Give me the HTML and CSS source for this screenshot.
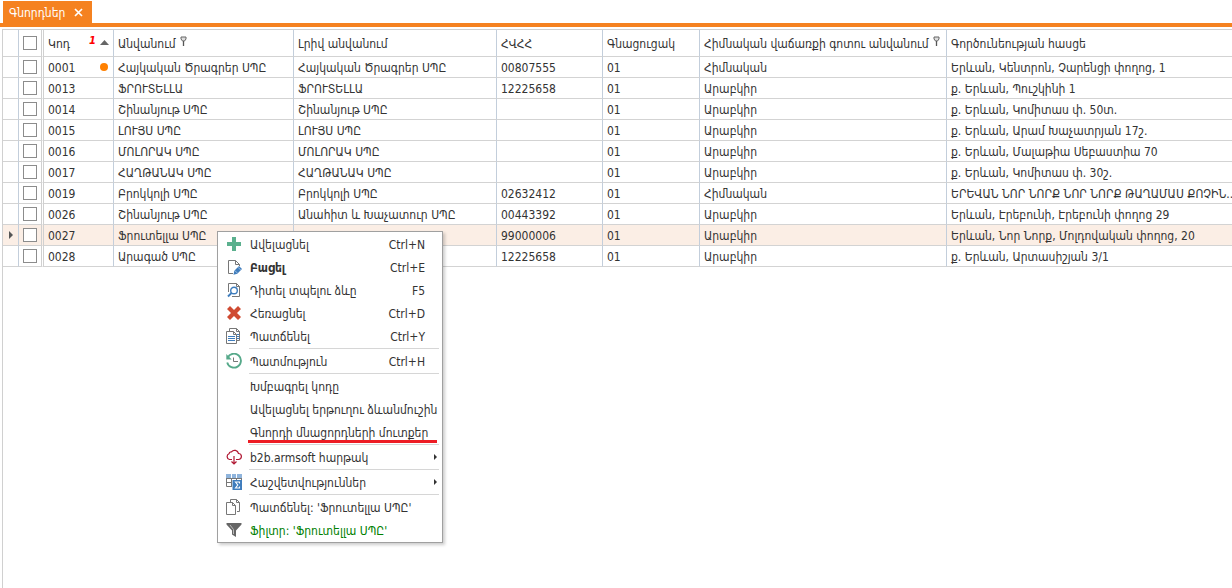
FILE: index.html
```html
<!DOCTYPE html>
<html lang="hy">
<head>
<meta charset="utf-8">
<title>Գնորդներ</title>
<link rel="stylesheet" href="styles.css">
</head>
<body>
<nav class="tabs">
  <div class="tab">
    <span>Գնորդներ</span>
    <button class="tab-close" type="button" aria-label="Փակել"><svg width="9" height="9" viewBox="0 0 9 9"><path d="M1 1l7 7M8 1L1 8" stroke="#fff" stroke-width="1.7"/></svg></button>
  </div>
</nav>
<main class="grid">
<table class="table">
  <colgroup><col class="c-mark"><col class="c-check"><col class="c-code"><col class="c-name"><col class="c-full"><col class="c-tax"><col class="c-price"><col class="c-zone"><col></colgroup>
  <thead>
    <tr>
      <th></th>
      <th class="check"><input type="checkbox" aria-label="Ընտրել բոլորը"></th>
      <th><div class="head"><span>Կոդ</span><span class="sort"><b class="order">1</b><svg class="arrow" width="9" height="5" viewBox="0 0 9 5"><path d="M0 5L4.500 0 9 5z" fill="#666"/></svg></span></div></th>
      <th>Անվանում<svg class="pin" width="7" height="10" viewBox="0 0 7 10"><path d="M1 1h5v2L4.500 5h-2L1 3z" fill="#ddd" stroke="#666"/><path d="M3.500 5v5" stroke="#555" stroke-width="1.300"/></svg></th>
      <th>Լրիվ անվանում</th>
      <th>ՀՎՀՀ</th>
      <th>Գնացուցակ</th>
      <th>Հիմնական վաճառքի գոտու անվանում<svg class="pin" width="7" height="10" viewBox="0 0 7 10"><path d="M1 1h5v2L4.500 5h-2L1 3z" fill="#ddd" stroke="#666"/><path d="M3.500 5v5" stroke="#555" stroke-width="1.300"/></svg></th>
      <th>Գործունեության հասցե</th>
    </tr>
  </thead>
  <tbody>
    <tr><td></td><td class="check"><input type="checkbox" aria-label="0001"></td><td><div class="head"><span>0001</span><i class="dot"></i></div></td><td>Հայկական Ծրագրեր ՍՊԸ</td><td>Հայկական Ծրագրեր ՍՊԸ</td><td>00807555</td><td>01</td><td>Հիմնական</td><td>Երևան, Կենտրոն, Չարենցի փողոց, 1</td></tr>
    <tr><td></td><td class="check"><input type="checkbox" aria-label="0013"></td><td>0013</td><td>ՖՐՈՒՏԵԼԼԱ</td><td>ՖՐՈՒՏԵԼԼԱ</td><td>12225658</td><td>01</td><td>Արաբկիր</td><td>ք. Երևան, Պուշկինի 1</td></tr>
    <tr><td></td><td class="check"><input type="checkbox" aria-label="0014"></td><td>0014</td><td>Շինանյութ ՍՊԸ</td><td>Շինանյութ ՍՊԸ</td><td></td><td>01</td><td>Արաբկիր</td><td>ք. Երևան, Կոմիտաս փ. 50տ.</td></tr>
    <tr><td></td><td class="check"><input type="checkbox" aria-label="0015"></td><td>0015</td><td>ԼՈՒՅՍ ՍՊԸ</td><td>ԼՈՒՅՍ ՍՊԸ</td><td></td><td>01</td><td>Արաբկիր</td><td>ք. Երևան, Արամ Խաչատրյան 17շ.</td></tr>
    <tr><td></td><td class="check"><input type="checkbox" aria-label="0016"></td><td>0016</td><td>ՄՈԼՈՐԱԿ ՍՊԸ</td><td>ՄՈԼՈՐԱԿ ՍՊԸ</td><td></td><td>01</td><td>Արաբկիր</td><td>ք. Երևան, Մալաթիա Սեբաստիա 70</td></tr>
    <tr><td></td><td class="check"><input type="checkbox" aria-label="0017"></td><td>0017</td><td>ՀԱՂԹԱՆԱԿ ՍՊԸ</td><td>ՀԱՂԹԱՆԱԿ ՍՊԸ</td><td></td><td>01</td><td>Արաբկիր</td><td>ք. Երևան, Կոմիտաս փ. 30շ.</td></tr>
    <tr><td></td><td class="check"><input type="checkbox" aria-label="0019"></td><td>0019</td><td>Բրոկկոլի ՍՊԸ</td><td>Բրոկկոլի ՍՊԸ</td><td>02632412</td><td>01</td><td>Հիմնական</td><td>ԵՐԵՎԱՆ ՆՈՐ ՆՈՐՔ ՆՈՐ ՆՈՐՔ ԹԱՂԱՄԱՍ ՔՈՉԻՆ..</td></tr>
    <tr><td></td><td class="check"><input type="checkbox" aria-label="0026"></td><td>0026</td><td>Շինանյութ ՍՊԸ</td><td>Անահիտ և Խաչատուր ՍՊԸ</td><td>00443392</td><td>01</td><td>Արաբկիր</td><td>Երևան, Էրեբունի, Էրեբունի փողոց 29</td></tr>
    <tr class="current"><td class="mark"><svg width="4" height="8" viewBox="0 0 4 8"><path d="M0 0l4 4-4 4z" fill="#555"/></svg></td><td class="check"><input type="checkbox" aria-label="0027"></td><td>0027</td><td>Ֆրուտելլա ՍՊԸ</td><td></td><td>99000006</td><td>01</td><td>Արաբկիր</td><td>Երևան, Նոր Նորք, Մոլդովական փողոց, 20</td></tr>
    <tr><td></td><td class="check"><input type="checkbox" aria-label="0028"></td><td>0028</td><td>Արագած ՍՊԸ</td><td></td><td>12225658</td><td>01</td><td>Արաբկիր</td><td>ք. Երևան, Արտասիշյան 3/1</td></tr>
  </tbody>
</table>
</main>
<div class="menu" role="menu">
  <button class="item" role="menuitem"><svg class="icon" viewBox="0 0 16 16"><path d="M6 1h4v5h5v4h-5v5H6v-5H1V6h5z" fill="#5bb08e"/></svg><span>Ավելացնել</span><kbd>Ctrl+N</kbd></button>
  <button class="item strong" role="menuitem"><svg class="icon" viewBox="0 0 16 16"><path d="M7 14.500H2.500v-13h7l4 4V7M9.500 1.500v4h4" fill="none" stroke="#777"/><path d="M7.500 15.800l.8-4L13 7l3 3-4.700 4.800z" fill="#3f7dbd"/><path d="M8.800 11.500l2.800 2.800M12 8.300l2.800 2.800" stroke="#fff" stroke-width=".5"/></svg><span>Բացել</span><kbd>Ctrl+E</kbd></button>
  <button class="item" role="menuitem"><svg class="icon" viewBox="0 0 16 16"><path d="M2.500 10V1.500h8l3 3v10H6M10.500 1.500v3h3" fill="none" stroke="#777"/><circle cx="8" cy="8.500" r="3.300" fill="#fff" stroke="#3f7dbd" stroke-width="1.400"/><path d="M5.600 10.900L2 14.500" stroke="#3f7dbd" stroke-width="2"/></svg><span>Դիտել տպելու ձևը</span><kbd>F5</kbd></button>
  <button class="item" role="menuitem"><svg class="icon" viewBox="0 0 16 16"><path d="M4 1l4 4 4-4 3 3-4 4 4 4-3 3-4-4-4 4-3-3 4-4-4-4z" fill="#cf4a31"/></svg><span>Հեռացնել</span><kbd>Ctrl+D</kbd></button>
  <button class="item" role="menuitem"><svg class="icon" viewBox="0 0 16 16"><path d="M3.500 3V.5h7l3 3v9H11M10.500.5v3h3" fill="none" stroke="#777"/><path d="M.5 3.500h7l3 3v9H.5zM7.500 3.500v3h3" fill="#fff" stroke="#777"/><path d="M2 8.500h7M2 10.500h7M2 12.500h7M11 6.500h2M11 8.500h2M11 10.500h2" stroke="#3f7dbd"/></svg><span>Պատճենել</span><kbd>Ctrl+Y</kbd></button>
  <hr>
  <button class="item" role="menuitem"><svg class="icon" viewBox="0 0 16 16"><path d="M1.700 4.500A7 7 0 1 1 1.200 9.500" fill="none" stroke="#56a98a" stroke-width="1.800"/><path d="M.3 1v5.500h5.400z" fill="#56a98a"/><path d="M7.500 4.500v4H12" fill="none" stroke="#777"/></svg><span>Պատմություն</span><kbd>Ctrl+H</kbd></button>
  <hr>
  <button class="item" role="menuitem"><i class="icon"></i><span>Խմբագրել կոդը</span></button>
  <button class="item" role="menuitem"><i class="icon"></i><span>Ավելացնել երթուղու ձևանմուշին</span></button>
  <button class="item noted" role="menuitem"><i class="icon"></i><span>Գնորդի մնացորդների մուտքեր</span></button>
  <hr>
  <button class="item" role="menuitem"><svg class="icon" viewBox="0 0 16 16"><path d="M6 10.500H3.500a3 3 0 0 1-.5-5.700 2.300 2.300 0 0 1 2.500-2 4 4 0 0 1 7 1.700 3 3 0 0 1-.2 6H10M8 7v8M5.500 12.500L8 15l2.500-2.500" fill="none" stroke="#b01732" stroke-width="1.200"/></svg><span>b2b.armsoft հարթակ</span><svg class="sub" width="3" height="6" viewBox="0 0 3 6"><path d="M0 0l3 3-3 3z" fill="#333"/></svg></button>
  <hr>
  <button class="item" role="menuitem"><svg class="icon" viewBox="0 0 16 16"><path d="M0 0h16v4H0z" fill="#8fb4dc"/><path d="M.5 4v8.500H6M0 4.500h16M0 8.500h6M5.500 4v9M10.500 4v2M15.500 4v2" fill="none" stroke="#777"/><path d="M5.500 0v4M10.500 0v4" stroke="#fff"/><path d="M6.500 6H16v10H6.500z" fill="#3f7dbd"/><path d="M13.500 9.500V8h-4l2.300 3-2.300 3h4v-1.500" fill="none" stroke="#fff" stroke-width="1.100"/></svg><span>Հաշվետվություններ</span><svg class="sub" width="3" height="6" viewBox="0 0 3 6"><path d="M0 0l3 3-3 3z" fill="#333"/></svg></button>
  <hr>
  <button class="item" role="menuitem"><svg class="icon" viewBox="0 0 16 16"><path d="M4.500 3V.5h6l3 3v9H11M10.500.5v3h3M.5 3.500h6l3 3v9H.5zM6.500 3.500v3h3" fill="none" stroke="#777"/></svg><span>Պատճենել: 'Ֆրուտելլա ՍՊԸ'</span></button>
  <button class="item filter" role="menuitem"><svg class="icon" viewBox="0 0 16 16"><path d="M.5 1h15v1.500L10 8.500V15l-4-2.500v-4L.5 2.500z" fill="#666"/><path d="M4 3l3.500 4.500V12" fill="none" stroke="#bbb"/></svg><span>Ֆիլտր: 'Ֆրուտելլա ՍՊԸ'</span></button>
</div>
</body>
</html>
```
FILE: styles.css
```css
* { box-sizing: border-box; }
body {
  margin: 0;
  min-height: 100vh;
  display: flex;
  flex-direction: column;
  background: #fff;
  color: #333;
  font: 12px/16px "DejaVu Sans Condensed", "DejaVu Sans", sans-serif;
}
button { font: inherit; color: inherit; background: none; border: 0; padding: 0; }
svg { display: block; flex: none; }

.tabs { display: flex; padding: 1px 0 0 3px; border-bottom: 4px solid #f58220; }
.tab { display: flex; align-items: center; gap: 9px; height: 22px; padding: 2px 9px 0 6px; background: #f58220; color: #fff; }
.tab-close { padding-bottom: 1px; }

.grid { flex: 1; margin: 2px 0 0 2px; border-left: 1px solid #d0d0d0; }
.table { width: 100%; table-layout: fixed; border-spacing: 0; border-top: 1px solid #d0d0d0; }
.c-mark { width: 16px; }
.c-check { width: 25px; }
.c-code { width: 70px; }
.c-name { width: 180px; }
.c-full { width: 203px; }
.c-tax { width: 106px; }
.c-price { width: 97px; }
.c-zone { width: 247px; }
th, td {
  height: 21px;
  padding: 1px 4px 0;
  border-right: 1px solid #c3cedb;
  border-bottom: 1px solid #d3d3d3;
  text-align: left;
  font-weight: normal;
  white-space: nowrap;
  overflow: hidden;
  vertical-align: middle;
}
th { height: 27px; }
th:last-child, td:last-child { border-right: 0; padding-right: 0; }
.check { padding: 0 0 0 4px; border-right: 3px double #d0d0d0; }
.check input { appearance: none; display: block; width: 14px; height: 14px; margin: 0; border: 1px solid #8c8c8c; background: #fff; }
.mark { padding: 0 0 0 6px; }
.current td { background: #fbeee5; }
.head { display: flex; align-items: center; justify-content: space-between; }
.sort { display: flex; align-items: center; gap: 4px; }
.arrow { margin-bottom: 2px; }
.order { color: #f00; font: italic bold 10px/10px "DejaVu Sans", sans-serif; padding-bottom: 6px; }
.dot { width: 8px; height: 8px; margin: 0 1px 1px 0; border-radius: 50%; background: #ff8000; }
.pin { display: inline-block; margin: 0 0 2px 4px; }

.menu {
  position: absolute;
  left: 217px;
  top: 231px;
  width: 226px;
  padding: 1px 0 0;
  background: #fff;
  border: 1px solid #a0a0a0;
  box-shadow: 2px 2px 3px rgba(0, 0, 0, .2);
}
.item { display: flex; align-items: center; width: 100%; height: 23px; padding: 0 5px 0 8px; text-align: left; white-space: nowrap; }
.icon { width: 16px; height: 16px; margin: 0 8px 1px 0; flex: none; }
.item kbd { margin: 0 12px 0 auto; font: inherit; font-weight: normal; }
.strong span { font-weight: bold; }
.sub { margin: 0 0 1px auto; }
.menu hr { margin: 0 3px 1px 31px; border: 0; height: 1px; background: #d6d6d6; }
.noted { background: linear-gradient(#ed1c24, #ed1c24) 30px 19px / 189px 3px no-repeat; }
.filter { color: #008000; }
```
